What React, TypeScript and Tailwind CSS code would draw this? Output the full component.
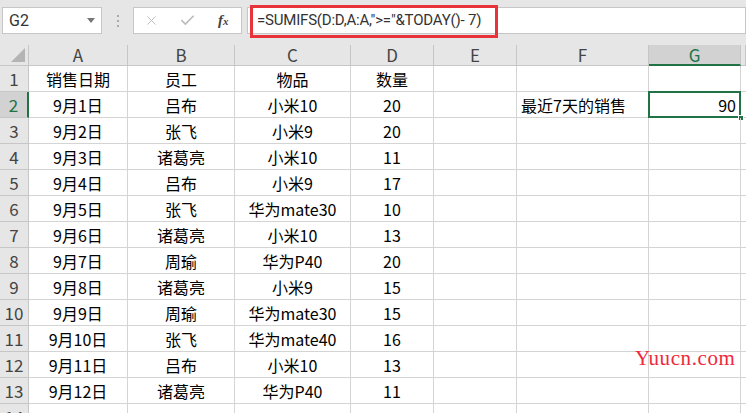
import { X, Check } from 'lucide-react'

const rows = [
    ['销售日期', '员工', '物品', '数量'],
    ['9月1日', '吕布', '小米10', '20'],
    ['9月2日', '张飞', '小米9', '20'],
    ['9月3日', '诸葛亮', '小米10', '11'],
    ['9月4日', '吕布', '小米9', '17'],
    ['9月5日', '张飞', '华为mate30', '10'],
    ['9月6日', '诸葛亮', '小米10', '13'],
    ['9月7日', '周瑜', '华为P40', '20'],
    ['9月8日', '诸葛亮', '小米9', '15'],
    ['9月9日', '周瑜', '华为mate30', '15'],
    ['9月10日', '张飞', '华为mate40', '16'],
    ['9月11日', '吕布', '小米10', '13'],
    ['9月12日', '诸葛亮', '华为P40', '11'],
    ['', '', '', ''],
]

const letters = ['A', 'B', 'C', 'D', 'E', 'F', 'G', 'H']

const cjk = { fontFamily: '"Noto Sans CJK SC", "Noto Sans", sans-serif' }

function FormulaBar() {
    return <div className="h-[45px] bg-[#e6e6e6] flex items-start pt-[7px] pl-[2px] relative">
        <div className="w-[100px] h-[27px] bg-white border border-[#c6c6c6] flex items-center justify-between pl-[6px] pr-[6px]">
            <span className="text-[16px] text-[#333]" style={{ fontFamily: 'Roboto, sans-serif' }}>G2</span>
            <span className="w-0 h-0 border-l-[4px] border-r-[4px] border-t-[5px] border-l-transparent border-r-transparent border-t-[#777]"></span>
        </div>
        <div className="w-[31px] h-[27px] flex flex-col items-center justify-center gap-[3px]">
            <span className="w-[2px] h-[2px] bg-[#aaa]"></span>
            <span className="w-[2px] h-[2px] bg-[#aaa]"></span>
            <span className="w-[2px] h-[2px] bg-[#aaa]"></span>
        </div>
        <div className="w-[109px] h-[27px] bg-white border border-[#c6c6c6] flex items-center">
            <div className="w-[36px] flex justify-center"><X className="size-[15px] text-[#bdbdbd]" strokeWidth={1.6} /></div>
            <div className="w-[36px] flex justify-center"><Check className="size-[17px] text-[#bdbdbd]" strokeWidth={2.4} /></div>
            <div className="w-[36px] flex justify-center"><span className="italic text-[15px] text-[#444] font-bold" style={{ fontFamily: '"Liberation Serif", serif' }}>f<span className="text-[11px]">x</span></span></div>
        </div>
        <div className="ml-[5px] flex-1 h-[27px] bg-white border border-[#c6c6c6] flex items-center pl-[9px]">
            <span className="text-[15px] text-[#333] tracking-[-0.2px] whitespace-pre" style={{ fontFamily: 'Roboto, sans-serif' }}>=SUMIFS(D:D,A:A,"&gt;="&amp;TODAY()- 7)</span>
        </div>
        <div className="absolute left-[250px] top-[5px] w-[248px] h-[33px] border-[3px] border-[#e8333a]"></div>
    </div>
}

function Sheet() {
    return <div className="grid grid-cols-[29px_99px_107px_116px_83px_83px_132px_92px_1fr] grid-rows-[21px_repeat(14,26px)] text-[16px] text-black" style={cjk}>
        <div className="bg-[#e6e6e6] border-r border-b border-[#c6c6c6] relative">
            <svg className="absolute right-[3px] bottom-[3px]" width="14" height="14"><polygon points="14,0 14,14 0,14" fill="#b4b4b4" /></svg>
        </div>
        {letters.map((l) => l === 'G'
            ? <div key={l} className="bg-[#d2d2d2] border-r border-[#c6c6c6] border-b-2 border-b-[#217346] flex items-center justify-center text-[#217346] text-[17px]">{l}</div>
            : <div key={l} className="bg-[#e6e6e6] border-r border-b border-[#c6c6c6] flex items-center justify-center text-[#444] text-[17px]">{l === 'H' ? '' : l}</div>
        )}
        {rows.map((r, i) => {
            const n = i + 1
            return [
                n === 2
                    ? <div key={'h' + n} className="bg-[#d2d2d2] border-b border-[#c6c6c6] border-r-2 border-r-[#217346] flex items-center justify-center text-[#217346] text-[17px]">{n}</div>
                    : <div key={'h' + n} className="bg-[#e6e6e6] border-r border-b border-[#c6c6c6] flex items-center justify-center text-[#444] text-[17px]">{n}</div>,
                ...r.map((c, j) => <div key={n + '-' + j} className="border-r border-b border-[#d4d4d4] flex items-center justify-center whitespace-nowrap">{c}</div>),
                <div key={n + 'E'} className="border-r border-b border-[#d4d4d4]"></div>,
                <div key={n + 'F'} className="border-r border-b border-[#d4d4d4] flex items-center pl-[4px] whitespace-nowrap">{n === 2 ? '最近7天的销售' : ''}</div>,
                <div key={n + 'G'} className="border-r border-b border-[#d4d4d4] flex items-center justify-end pr-[4px] relative">
                    {n === 2 ? <>
                        <span>90</span>
                        <div className="absolute -left-[1px] -top-[1px] -right-[1px] -bottom-[1px] border-2 border-[#217346]"></div>
                        <div className="absolute -right-[4px] -bottom-[4px] w-[6px] h-[6px] bg-[#217346] border border-white"></div>
                    </> : null}
                </div>,
                <div key={n + 'H'} className="border-b border-[#d4d4d4]"></div>,
            ]
        })}
    </div>
}

export default function App() {
    return <div className="w-[746px] h-[413px] overflow-hidden bg-white relative">
        <FormulaBar />
        <Sheet />
        <div className="absolute left-[635px] top-[343px] text-[21px] text-[#f0283c] tracking-[0.6px]" style={{ fontFamily: '"Liberation Serif", serif' }}>Yuucn.com</div>
    </div>
}
